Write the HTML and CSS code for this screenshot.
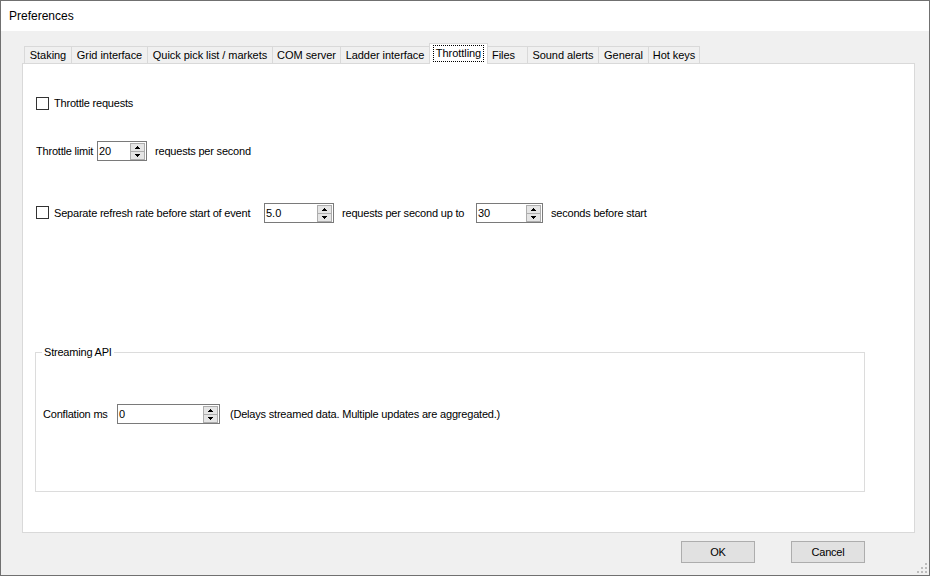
FILE: index.html
```html
<!DOCTYPE html>
<html>
<head>
<meta charset="utf-8">
<link rel="stylesheet" href="styles.css">
</head>
<body>
<div class="window">
  <div class="titlebar">Preferences</div>
  <div class="client">
    <div class="tabstrip">
      <div class="tab">Staking</div>
      <div class="tab">Grid interface</div>
      <div class="tab">Quick pick list / markets</div>
      <div class="tab">COM server</div>
      <div class="tab">Ladder interface</div>
      <div class="tab sel"><span class="focus">Throttling</span></div>
      <div class="tab files">Files</div>
      <div class="tab">Sound alerts</div>
      <div class="tab">General</div>
      <div class="tab">Hot keys</div>
    </div>
    <div class="panel">
      <div class="row r1">
        <span class="check"></span><span class="lbl">Throttle requests</span>
      </div>
      <div class="row r2">
        <span class="lbl w-limit">Throttle limit</span>
        <div class="spin s-limit">
          <span class="val">20</span>
          <span class="arrows">
            <span class="arr up"><svg width="5" height="3" viewBox="0 0 5 3"><rect x="2" y="0" width="1" height="1"/><rect x="1" y="1" width="3" height="1"/><rect x="0" y="2" width="5" height="1"/></svg></span>
            <span class="arr dn"><svg width="5" height="3" viewBox="0 0 5 3"><rect x="0" y="0" width="5" height="1"/><rect x="1" y="1" width="3" height="1"/><rect x="2" y="2" width="1" height="1"/></svg></span>
          </span>
        </div>
        <span class="lbl gap8">requests per second</span>
      </div>
      <div class="row r3">
        <span class="check lift"></span><span class="lbl w-sep">Separate refresh rate before start of event</span>
        <div class="spin s-rate">
          <span class="val">5.0</span>
          <span class="arrows">
            <span class="arr up"><svg width="5" height="3" viewBox="0 0 5 3"><rect x="2" y="0" width="1" height="1"/><rect x="1" y="1" width="3" height="1"/><rect x="0" y="2" width="5" height="1"/></svg></span>
            <span class="arr dn"><svg width="5" height="3" viewBox="0 0 5 3"><rect x="0" y="0" width="5" height="1"/><rect x="1" y="1" width="3" height="1"/><rect x="2" y="2" width="1" height="1"/></svg></span>
          </span>
        </div>
        <span class="lbl gap8 w-upto">requests per second up to</span>
        <div class="spin s-secs">
          <span class="val">30</span>
          <span class="arrows">
            <span class="arr up"><svg width="5" height="3" viewBox="0 0 5 3"><rect x="2" y="0" width="1" height="1"/><rect x="1" y="1" width="3" height="1"/><rect x="0" y="2" width="5" height="1"/></svg></span>
            <span class="arr dn"><svg width="5" height="3" viewBox="0 0 5 3"><rect x="0" y="0" width="5" height="1"/><rect x="1" y="1" width="3" height="1"/><rect x="2" y="2" width="1" height="1"/></svg></span>
          </span>
        </div>
        <span class="lbl gap8">seconds before start</span>
      </div>
      <fieldset class="group">
        <legend>Streaming API</legend>
        <div class="row r4">
          <span class="lbl w-conf">Conflation ms</span>
          <div class="spin s-conf">
            <span class="val">0</span>
            <span class="arrows">
              <span class="arr up"><svg width="5" height="3" viewBox="0 0 5 3"><rect x="2" y="0" width="1" height="1"/><rect x="1" y="1" width="3" height="1"/><rect x="0" y="2" width="5" height="1"/></svg></span>
              <span class="arr dn"><svg width="5" height="3" viewBox="0 0 5 3"><rect x="0" y="0" width="5" height="1"/><rect x="1" y="1" width="3" height="1"/><rect x="2" y="2" width="1" height="1"/></svg></span>
            </span>
          </div>
          <span class="lbl gap10">(Delays streamed data. Multiple updates are aggregated.)</span>
        </div>
      </fieldset>
    </div>
    <div class="buttons">
      <button class="btn">OK</button>
      <button class="btn">Cancel</button>
    </div>
  </div>
  <svg class="grip" width="10" height="10" viewBox="0 0 10 10">
    <rect x="8" y="0" width="2" height="2"/>
    <rect x="4" y="4" width="2" height="2"/><rect x="8" y="4" width="2" height="2"/>
    <rect x="0" y="8" width="2" height="2"/><rect x="4" y="8" width="2" height="2"/><rect x="8" y="8" width="2" height="2"/>
  </svg>
</div>
</body>
</html>
```
FILE: styles.css
```css
html, body {
  margin: 0;
  padding: 0;
  background: #f0f0f0;
}

.window {
  width: 930px;
  height: 576px;
  box-sizing: border-box;
  border: 1px solid #707070;
  display: flex;
  flex-direction: column;
  position: relative;
  background: #f0f0f0;
  font-family: "Liberation Sans", Arial, sans-serif;
  font-size: 11px;
  color: #000;
}

.titlebar {
  height: 30px;
  line-height: 30px;
  background: #fff;
  font-size: 12px;
  padding-left: 8px;
}

.client {
  flex: 1;
  display: flex;
  flex-direction: column;
  padding: 12px 14px 0 21px;
}

.tabstrip {
  display: flex;
  align-items: flex-end;
  height: 20px;
  padding-left: 2px;
  letter-spacing: -0.05px;
}

.tab {
  box-sizing: border-box;
  height: 17px;
  line-height: 16px;
  border: 1px solid #d9d9d9;
  border-bottom: none;
  margin-left: -1px;
  text-align: center;
  white-space: nowrap;
  background: #f0f0f0;
}
.tab:first-child { margin-left: 0; width: 48px; }
.tab:nth-child(2) { width: 77px; }
.tab:nth-child(3) { width: 126px; }
.tab:nth-child(4) { width: 69px; }
.tab:nth-child(5) { width: 90px; }
.tab:nth-child(6) { width: 59px; }
.tab:nth-child(7) { width: 41px; }
.tab:nth-child(8) { width: 72px; }
.tab:nth-child(9) { width: 51px; }
.tab:nth-child(10) { width: 52px; }
.tab.files { text-align: left; padding-left: 4px; }

.tab.sel {
  height: 21px;
  margin-bottom: -1px;
  background: #fff;
  position: relative;
  z-index: 1;
  display: flex;
  justify-content: center;
  align-items: flex-start;
  padding-top: 1px;
}

.focus {
  display: block;
  height: 15px;
  line-height: 15px;
  padding: 0 2px;
  border: 1px dotted #000;
}

.panel {
  box-sizing: border-box;
  height: 470px;
  border: 1px solid #d9d9d9;
  background: #fff;
  padding: 29px 0 0 13px;
  letter-spacing: -0.2px;
}

.row {
  display: flex;
  align-items: center;
  height: 20px;
  white-space: nowrap;
}
.r2 { margin-top: 28px; }
.r3 { margin-top: 42px; }
.r4 { margin-top: 45px; margin-left: 7px; }

.check {
  flex: none;
  width: 13px;
  height: 13px;
  box-sizing: border-box;
  border: 1px solid #333;
  background: #fff;
  margin-right: 5px;
}
.check.lift { margin-top: -1px; }

.lbl { flex: none; }
.w-limit { width: 61px; }
.w-sep { width: 210px; }
.w-upto { width: 134px; }
.w-conf { width: 74px; }
.gap8 { margin-left: 8px; }
.gap10 { margin-left: 10px; }

.spin {
  flex: none;
  box-sizing: border-box;
  height: 20px;
  border: 1px solid #7a7a7a;
  background: #fff;
  display: flex;
  letter-spacing: 0;
}
.s-limit { width: 50px; }
.s-rate { width: 70px; }
.s-secs { width: 67px; }
.s-conf { width: 103px; }

.val {
  flex: 1;
  padding-left: 1px;
  line-height: 18px;
}

.arrows {
  width: 15px;
  margin: 1px 1px 0 0;
  display: flex;
  flex-direction: column;
}

.arr {
  box-sizing: border-box;
  border: 1px solid #adadad;
  background: #e5e5e5;
  display: flex;
  align-items: center;
  justify-content: center;
}
.arr.up { height: 9px; }
.arr.dn { height: 8px; border-top: none; }
.arr svg { display: block; fill: #000; shape-rendering: crispEdges; }

.group {
  box-sizing: border-box;
  width: 830px;
  height: 146px;
  margin: 123px 0 0 -1px;
  padding: 0;
  border: 1px solid #dcdcdc;
  min-width: 0;
}
.group legend {
  margin-left: 6px;
  padding: 0 2px;
  line-height: 13px;
}

.buttons {
  display: flex;
  justify-content: flex-end;
  gap: 36px;
  margin-top: 8px;
  padding-right: 50px;
}

.btn {
  width: 74px;
  height: 22px;
  box-sizing: border-box;
  padding: 0;
  font-family: "Liberation Sans", Arial, sans-serif;
  font-size: 11px;
  letter-spacing: -0.2px;
  color: #000;
  background: #e1e1e1;
  border: 1px solid #adadad;
}

.grip {
  position: absolute;
  right: 2px;
  bottom: 2px;
  fill: #bcbcbc;
  shape-rendering: crispEdges;
}
```
